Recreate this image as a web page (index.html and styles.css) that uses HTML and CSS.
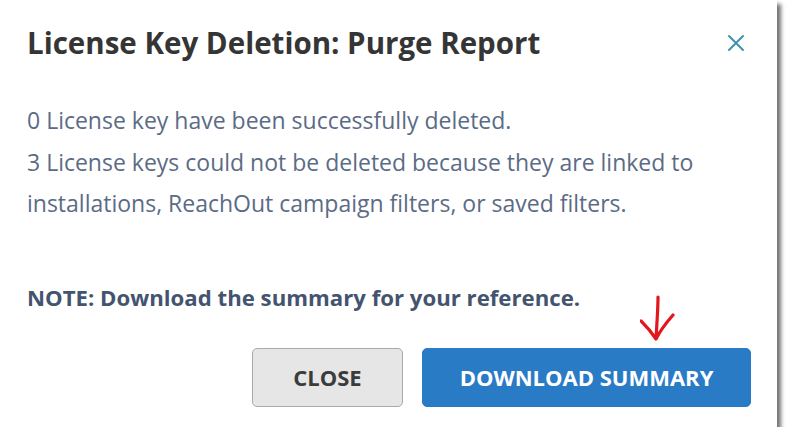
FILE: index.html
```html
<!DOCTYPE html>
<html>
<head>
<meta charset="utf-8">
<link rel="stylesheet" href="styles.css">
</head>
<body>
<div class="dialog">
  <header class="head">
    <h1 class="title">License Key Deletion: Purge Report</h1>
    <button class="x" aria-label="Close">
      <svg width="18" height="18" viewBox="0 0 18 18"><path d="M2 2L16 16M16 2L2 16" stroke="#3f93ad" stroke-width="2" stroke-linecap="round"/></svg>
    </button>
  </header>
  <div class="msg">
    <p>0 License key have been successfully deleted.</p>
    <p>3 License keys could not be deleted because they are linked to<br>installations, ReachOut campaign filters, or saved filters.</p>
  </div>
  <p class="note">NOTE: Download the summary for your reference.</p>
  <div class="actions">
    <button class="btn btn-close">CLOSE</button>
    <button class="btn btn-primary">DOWNLOAD SUMMARY</button>
  </div>
  <svg class="arrow" width="40" height="50" viewBox="0 0 40 50"><path d="M18 2 C18 14 17 26 16 44 M1 26 C7 32 12 38 16 44 C20 36 26 28 33 20" fill="none" stroke="#e3161c" stroke-width="3.2" stroke-linecap="round" stroke-linejoin="round"/></svg>
</div>
</body>
</html>
```
FILE: styles.css
```css
html, body {
  margin: 0;
  padding: 0;
  background: #fff;
}
.dialog {
  position: relative;
  width: 777px;
  height: 427px;
  box-sizing: border-box;
  background: #fff;
  box-shadow: 4px 4px 4px rgba(0,0,0,0.55);
  padding: 0 26px 0 27px;
  font-family: "Open Sans", sans-serif;
}
.head {
  display: flex;
  align-items: center;
  justify-content: space-between;
  padding-top: 26px;
  height: 34px;
}
.title {
  margin: 0;
  font-size: 29.5px;
  font-weight: 700;
  color: #353535;
  line-height: 34px;
}
.x {
  border: 0;
  background: none;
  padding: 0;
  width: 18px;
  height: 18px;
  margin-right: 6px;
  display: flex;
}
.msg {
  margin-top: 40px;
  color: #5b6b86;
  font-size: 23px;
  line-height: 41.5px;
}
.msg p { margin: 0; }
.note {
  margin: 58px 0 0;
  font-size: 22.2px;
  line-height: 30px;
  font-weight: 700;
  color: #44546f;
}
.actions {
  display: flex;
  justify-content: flex-end;
  gap: 19px;
  margin-top: 35px;
}
.btn {
  height: 59px;
  border-radius: 5px;
  font-family: inherit;
  font-size: 22px;
  font-weight: 700;
  cursor: pointer;
  padding: 0;
}
.btn-close {
  width: 151px;
  background: #e6e6e6;
  border: 1px solid #a9a9a9;
  color: #3b3b3b;
}
.btn-primary {
  width: 329px;
  background: #2a7bc6;
  border: 1px solid #2a7bc6;
  color: #fff;
}
.arrow {
  position: absolute;
  left: 640px;
  top: 295px;
}
```
